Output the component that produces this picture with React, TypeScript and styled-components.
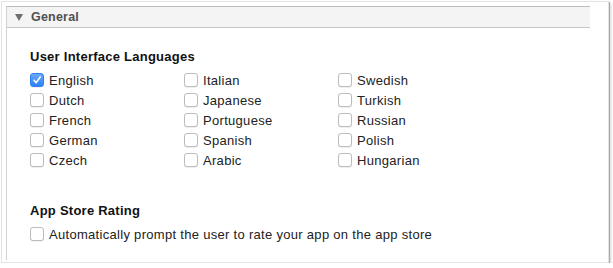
import React from 'react';
import styled, { createGlobalStyle } from 'styled-components';

const GlobalStyle = createGlobalStyle`
  body {
    margin: 0;
    background: #ffffff;
    font-family: "Liberation Sans", Arial, sans-serif;
    color: #222222;
  }
`;

const Window = styled.div`
  margin: 1px 0 0 1px;
  width: 608px;
  height: 262px;
  padding: 4px 0 0 4px;
  box-sizing: border-box;
  border: 1px solid #e4e4e4;
  box-shadow: 1px 1px 0 #a8a8a8, 2px 2px 3px rgba(0, 0, 0, 0.18);
  background: #ffffff;
`;

const Panel = styled.section`
  width: 584px;
  height: 254px;
  box-sizing: border-box;
  border-left: 1px solid #d2d2d2;
  border-top: 1px solid #bdbdbd;
`;

const PanelHeader = styled.div`
  display: flex;
  align-items: center;
  gap: 8px;
  height: 20px;
  padding-left: 8px;
  background: #f4f4f4;
  border-bottom: 1px solid #c6c6c6;
  font-size: 12.5px;
  letter-spacing: 0.2px;
  font-weight: bold;
  color: #505050;
`;

const Disclosure = styled.svg`
  width: 8px;
  height: 7px;
  fill: #6f6f6f;
`;

const PanelBody = styled.div`
  padding: 0 0 0 23px;
`;

const SectionTitle = styled.h3<{ $top: number }>`
  margin: ${(p) => p.$top}px 0 5px;
  font-size: 13px;
  line-height: 16px;
  letter-spacing: 0.25px;
  font-weight: bold;
  color: #111111;
`;

const OptionGrid = styled.div`
  display: grid;
  grid-template-columns: repeat(3, 154px);
  grid-template-rows: repeat(5, 20px);
  grid-auto-flow: column;
`;

const Option = styled.label`
  display: flex;
  align-items: center;
  gap: 5px;
  height: 20px;
  font-size: 13px;
  letter-spacing: 0.3px;
  color: #222222;
  white-space: nowrap;
`;

const Box = styled.span<{ $checked?: boolean }>`
  display: flex;
  align-items: center;
  justify-content: center;
  width: 14px;
  height: 14px;
  box-sizing: border-box;
  border-radius: 3px;
  border: 1px solid ${(p) => (p.$checked ? '#2f7ff0' : '#bcbcbc')};
  background: ${(p) =>
    p.$checked ? 'linear-gradient(#6aa9fb, #2d82f5)' : '#ffffff'};
  box-shadow: 0 0.5px 0.5px rgba(0, 0, 0, 0.12);
`;

const Check = styled.svg`
  width: 10px;
  height: 10px;
  fill: none;
  stroke: #ffffff;
  stroke-width: 1.6;
  stroke-linecap: round;
  stroke-linejoin: round;
`;

const languages = [
  'English', 'Dutch', 'French', 'German', 'Czech',
  'Italian', 'Japanese', 'Portuguese', 'Spanish', 'Arabic',
  'Swedish', 'Turkish', 'Russian', 'Polish', 'Hungarian',
];

function Checkbox({ label, checked }: { label: string; checked?: boolean }) {
  return (
    <Option>
      <Box $checked={checked}>
        {checked && (
          <Check viewBox="0 0 10 10">
            <path d="M2 5.3 L4.2 7.6 L8.2 2" />
          </Check>
        )}
      </Box>
      {label}
    </Option>
  );
}

export default function App() {
  return (
    <>
      <GlobalStyle />
      <Window>
        <Panel>
          <PanelHeader>
            <Disclosure viewBox="0 0 8 7">
              <polygon points="0,0 8,0 4,7" />
            </Disclosure>
            General
          </PanelHeader>
          <PanelBody>
            <SectionTitle $top={21}>User Interface Languages</SectionTitle>
            <OptionGrid>
              {languages.map((lang) => (
                <Checkbox key={lang} label={lang} checked={lang === 'English'} />
              ))}
            </OptionGrid>
            <SectionTitle $top={33}>App Store Rating</SectionTitle>
            <Checkbox label="Automatically prompt the user to rate your app on the app store" />
          </PanelBody>
        </Panel>
      </Window>
    </>
  );
}
